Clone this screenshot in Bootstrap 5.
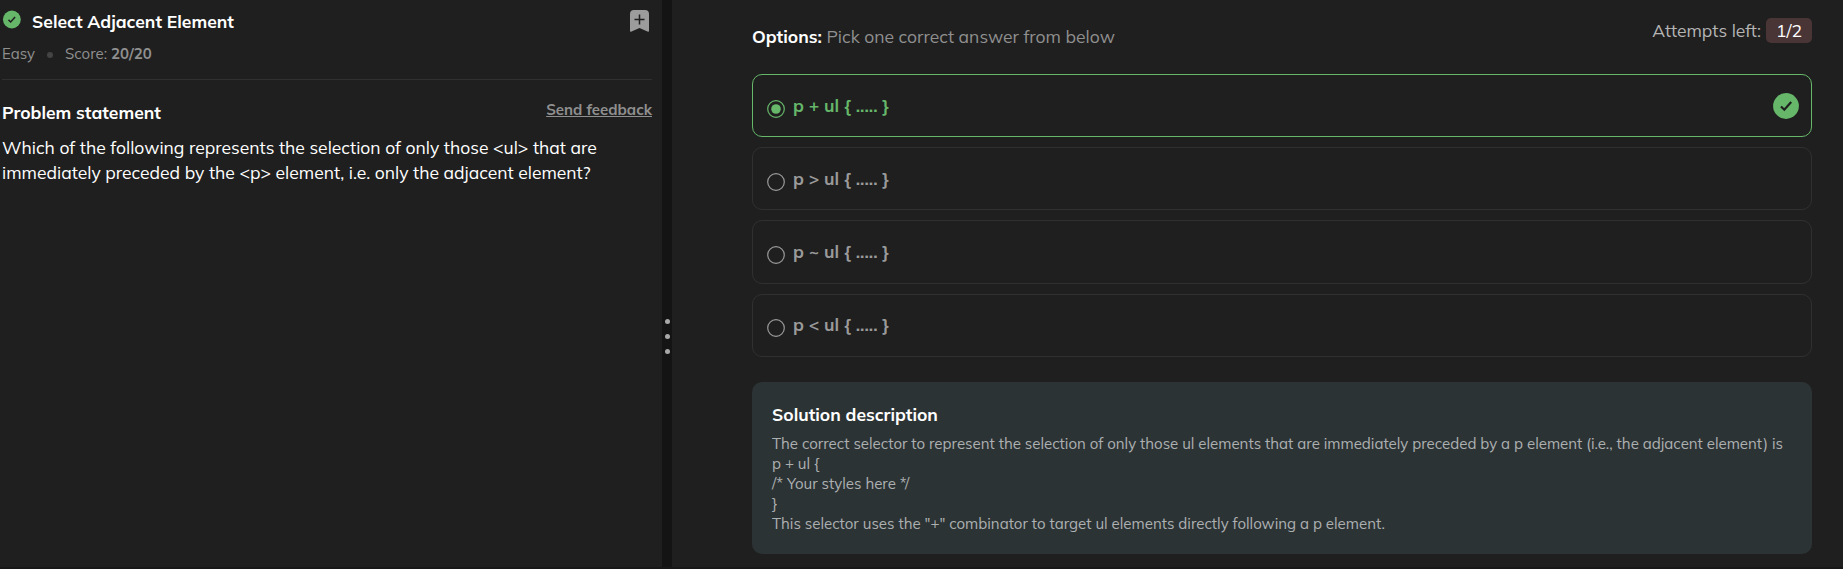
<!DOCTYPE html>
<html lang="en">
<head>
<meta charset="utf-8">
<meta name="viewport" content="width=device-width, initial-scale=1">
<title>Select Adjacent Element</title>
<link rel="stylesheet" href="https://cdn.jsdelivr.net/npm/bootstrap@5.3.0/dist/css/bootstrap.min.css">
<style>
body{background:#1f1f1f;color:#fff;font-family:Mulish,Muli,Lato,sans-serif;font-size:17.52px;height:569px;overflow:hidden}
.app-shell{height:569px;border-bottom:2px solid #191717}
.problem-pane{width:662px;padding:9px 10px 0 2px}
.splitter{width:10px;background:#141414;gap:10px;padding:106px 0 0 1px}
.splitter i{width:5px;height:5px;border-radius:50%;background:#a9a9a9}
.answer-pane{padding:18px 31px 0 80px}
.title-text{font-size:17.5px;line-height:24px;font-weight:700}
.title-main{margin-left:11px}
.ic-done{margin:1px 0 0}
.ic-mark{margin:1px 3px 0 0}
.meta-row{font-size:15px;line-height:20px;color:#8f8f8f;margin-top:11px}
.meta-dot{width:6px;height:6px;border-radius:50%;background:#444;margin:1px 12px 0}
.rule-line{height:1px;background:#303030;margin-top:15px}
.problem-head{padding-top:20px}
.statement{line-height:25px;margin-top:11px}
.feedback{font-size:15px;line-height:20px;font-weight:700;color:#8f8f8f}
.feedback:hover{color:#b4b4b4}
.options-label{margin-top:6px;line-height:25px}
.pick{color:#8f8f8f}
.attempts{color:#b4b4b4;line-height:25px}
.tries{background:#493436;color:#fff;border-radius:5px;width:46px;height:25px;margin-left:5px}
.choices{gap:10px;margin-top:25px}
.choice{height:63.2px;border:1px solid #303030;border-radius:10px;padding:0 12px 0 13.500px;color:#9a9a9a;font-weight:700}
.choice.correct{border-color:#66b76a;color:#66b76a}
.choice svg{flex:none}
.radio-mark{margin-top:6px}
.choice-label{margin:-1px 0 0 8.500px;font-size:17.6px}
.solution{background:#2c3335;border-radius:10px;height:172px;margin-top:25px;padding:20px}
.solution p{font-size:15.020px;line-height:20px;color:#adb0b1;margin-top:8px}
</style>
</head>
<body>
<div class="app-shell d-flex">
  <section class="problem-pane flex-shrink-0">
    <div class="d-flex">
      <svg class="ic-done" width="19" height="19" viewBox="0 0 26 26"><circle cx="13.500" cy="13" r="12.200" fill="#66b76a"/><path d="M8.900 13.500l3 3 6-6.800" fill="none" stroke="#1f1f1f" stroke-width="2"/></svg>
      <span class="title-text title-main">Select Adjacent Element</span>
      <svg class="ms-auto ic-mark" width="19" height="22" viewBox="0 0 19 22"><path d="M4 0h11a4 4 0 0 1 4 4v17q0 1-1 .8l-8.500-3.800L1 21.800Q0 22 0 21V4a4 4 0 0 1 4-4z" fill="#9c9c9c"/><path d="M9.500 4.500v10M4.500 9.500h10" stroke="#1f1f1f" stroke-width="1.500"/></svg>
    </div>
    <div class="meta-row d-flex align-items-center"><span>Easy</span><span class="meta-dot"></span><span>Score:&nbsp;</span><b>20/20</b></div>
    <div class="rule-line"></div>
    <div class="problem-head d-flex justify-content-between"><span class="title-text">Problem statement</span><a class="feedback" href="#">Send feedback</a></div>
    <div class="statement">Which of the following represents the selection of only those &lt;ul&gt; that are immediately preceded by the &lt;p&gt; element, i.e. only the adjacent element?</div>
  </section>
  <div class="splitter flex-shrink-0 d-flex flex-column align-items-center justify-content-center"><i></i><i></i><i></i></div>
  <main class="answer-pane flex-grow-1">
    <div class="d-flex">
      <div class="options-label"><b>Options:</b> <span class="pick">Pick one correct answer from below</span></div>
      <span class="attempts ms-auto">Attempts left:</span><span class="tries d-flex align-items-center justify-content-center">1/2</span>
    </div>
    <div class="choices d-flex flex-column">
      <div class="choice correct d-flex align-items-center">
        <svg class="radio-mark" width="18" height="18" viewBox="0 0 18 18"><circle cx="9" cy="9" r="8.300" fill="none" stroke="#66b76a" stroke-width="1.200"/><circle cx="9" cy="9" r="4.800" fill="#66b76a"/></svg>
        <span class="choice-label">p + ul { ..... }</span>
        <svg class="ms-auto" width="26" height="26" viewBox="0 0 26 26"><circle cx="13" cy="13" r="12.900" fill="#66b76a"/><path d="M8 13.500l3.300 3.200 6.900-7.800" fill="none" stroke="#1f1f1f" stroke-width="2.200"/></svg>
      </div>
      <div class="choice d-flex align-items-center">
        <svg class="radio-mark" width="18" height="18" viewBox="0 0 18 18"><circle cx="9" cy="9" r="8.300" fill="none" stroke="#9a9a9a" stroke-width="1.200"/></svg>
        <span class="choice-label">p &gt; ul { ..... }</span>
      </div>
      <div class="choice d-flex align-items-center">
        <svg class="radio-mark" width="18" height="18" viewBox="0 0 18 18"><circle cx="9" cy="9" r="8.300" fill="none" stroke="#9a9a9a" stroke-width="1.200"/></svg>
        <span class="choice-label">p ~ ul { ..... }</span>
      </div>
      <div class="choice d-flex align-items-center">
        <svg class="radio-mark" width="18" height="18" viewBox="0 0 18 18"><circle cx="9" cy="9" r="8.300" fill="none" stroke="#9a9a9a" stroke-width="1.200"/></svg>
        <span class="choice-label">p &lt; ul { ..... }</span>
      </div>
    </div>
    <div class="solution">
      <div class="title-text">Solution description</div>
      <p class="mb-0">The correct selector to represent the selection of only those ul elements that are immediately preceded by a p element (i.e., the adjacent element) is<br>p + ul {<br>/* Your styles here */<br>}<br>This selector uses the "+" combinator to target ul elements directly following a p element.</p>
    </div>
  </main>
</div>
<script src="https://cdn.jsdelivr.net/npm/bootstrap@5.3.0/dist/js/bootstrap.bundle.min.js"></script>
</body>
</html>
